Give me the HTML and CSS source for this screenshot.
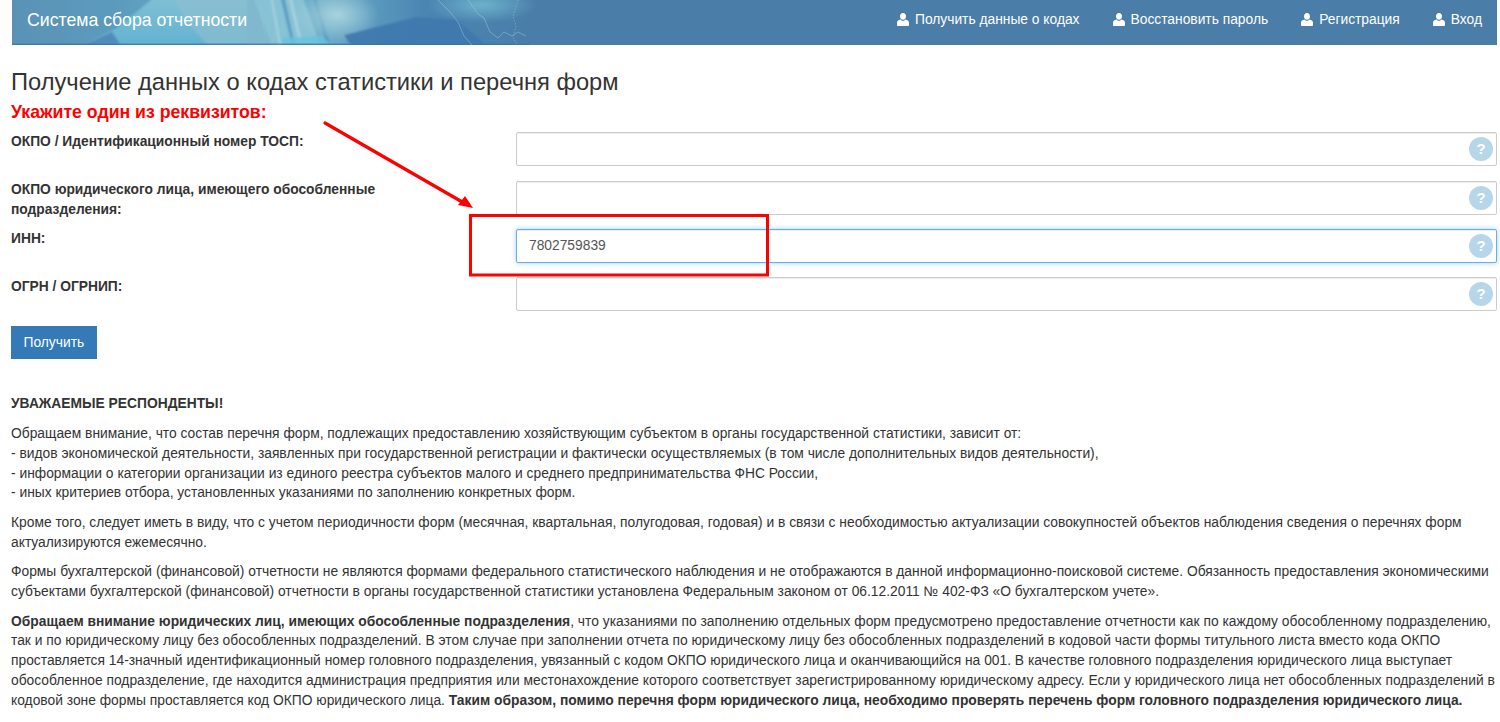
FILE: index.html
```html
<!DOCTYPE html>
<html lang="ru">
<head>
<meta charset="utf-8">
<title>Система сбора отчетности</title>
<link rel="stylesheet" href="styles.css">
</head>
<body>
<svg width="0" height="0" class="defs"><defs>
<symbol id="user" viewBox="0 0 12 13"><path d="M6 0C4.2 0 3 1.4 3 3.300 3 5 3.900 6.800 6 6.800S9 5 9 3.300C9 1.400 7.800 0 6 0zM3.600 6.400C1.500 6.900 0 7.700 0 9.400V12c0 .6.4 1 1 1h10c.6 0 1-.4 1-1V9.400c0-1.700-1.500-2.500-3.600-3-.6.8-1.400 1.400-2.400 1.400S4.200 7.200 3.600 6.400z" fill="#fff"/></symbol>
</defs></svg>
<header class="topbar">
  <svg class="topbar-art" viewBox="0 0 530 45" width="530" height="45" aria-hidden="true">
    <defs>
      <linearGradient id="base" x1="0" x2="1" y1="0" y2="0">
        <stop offset="0" stop-color="#5a92b6"/><stop offset=".2" stop-color="#5c9bbd"/><stop offset=".42" stop-color="#68adc8"/><stop offset=".6" stop-color="#6aaac8"/><stop offset=".78" stop-color="#4a85b2"/><stop offset="1" stop-color="#4a7da8"/>
      </linearGradient>
      <radialGradient id="glow"><stop offset="0" stop-color="#a8d3dd"/><stop offset="1" stop-color="#a8d3dd" stop-opacity="0"/></radialGradient>
      <radialGradient id="glow2"><stop offset="0" stop-color="#6db2cc"/><stop offset="1" stop-color="#6db2cc" stop-opacity="0"/></radialGradient>
      <linearGradient id="fade" x1="0" x2="0" y1="0" y2="1"><stop offset="0" stop-color="#82c0d4"/><stop offset="1" stop-color="#5fb2d2"/></linearGradient>
      <filter id="soft"><feGaussianBlur stdDeviation="1.200"/></filter>
    </defs>
    <rect width="530" height="45" fill="url(#base)"/>
    <g filter="url(#soft)">
      <polygon points="60,50 105,28 145,-5 235,-5 235,50" fill="url(#fade)"/>
      <polygon points="60,50 100,32 112,50" fill="#4f8cbc"/>
      <polygon points="160,-5 240,-5 265,50 200,50 175,22" fill="#8dbfd0" opacity=".65"/>
      <polygon points="240,-5 290,-5 310,50 262,50" fill="#8cc4d6" opacity=".9"/>
      <g fill="#4f93bb" opacity=".75">
        <polygon points="268,-5 272,-5 284,50 281,50"/>
        <polygon points="300,-5 303,-5 320,50 316,50"/>
      </g>
      <g fill="#b4dae2" opacity=".7">
        <polygon points="276,-5 279,-5 292,50 289,50"/>
        <polygon points="258,-5 260,-5 270,50 268,50"/>
      </g>
      <polygon points="270,38 310,36 325,50 270,50" fill="#66c2de" opacity=".8"/>
      <ellipse cx="325" cy="15" rx="42" ry="26" fill="url(#glow)"/>
      <ellipse cx="470" cy="5" rx="55" ry="18" fill="url(#glow2)"/>
      <polygon points="332,35 405,17 445,20 480,50 342,50" fill="#3f78ad" opacity=".9"/>
    </g>
    <rect y="43.500" width="518" height="1.500" fill="#3c76a6" opacity=".8"/>
    <g fill="none" stroke="#b7d6e2" stroke-width=".8" opacity=".5">
      <path d="M426 0l12 12 8 10 6 14 8 9"/>
      <path d="M456 0l10 14 6 4 6 14 8 6 6-6 8 4 6-4 8 4"/>
      <path d="M506 0l-5 16 3 10-3 12 4 6" stroke-dasharray="1.500 1.500"/>
      <path d="M280 10l8 28M248 6l6 35" stroke-dasharray="1 2"/>
    </g>
  </svg>
  <a class="brand" href="#">Система сбора отчетности</a>
  <nav class="nav">
    <a href="#"><svg class="user"><use href="#user"/></svg>Получить данные о кодах</a>
    <a href="#"><svg class="user"><use href="#user"/></svg>Восстановить пароль</a>
    <a href="#"><svg class="user"><use href="#user"/></svg>Регистрация</a>
    <a href="#"><svg class="user"><use href="#user"/></svg>Вход</a>
  </nav>
</header>
<main class="page">
  <h1 class="title">Получение данных о кодах статистики и перечня форм</h1>
  <div class="hint">Укажите один из реквизитов:</div>
  <form class="form">
    <label class="lbl">ОКПО / Идентификационный номер ТОСП:</label>
    <div class="field"><input type="text"><span class="help">?</span></div>
    <label class="lbl">ОКПО юридического лица, имеющего обособленные подразделения:</label>
    <div class="field"><input type="text"><span class="help">?</span></div>
    <label class="lbl">ИНН:</label>
    <div class="field"><input type="text" class="active" value="7802759839"><span class="help">?</span></div>
    <label class="lbl">ОГРН / ОГРНИП:</label>
    <div class="field"><input type="text"><span class="help">?</span></div>
  </form>
  <button class="btn" type="button">Получить</button>
  <section class="notes">
    <p><b>УВАЖАЕМЫЕ РЕСПОНДЕНТЫ!</b></p>
    <p>Обращаем внимание, что состав перечня форм, подлежащих предоставлению хозяйствующим субъектом в органы государственной статистики, зависит от:<br>
    - видов экономической деятельности, заявленных при государственной регистрации и фактически осуществляемых (в том числе дополнительных видов деятельности),<br>
    - информации о категории организации из единого реестра субъектов малого и среднего предпринимательства ФНС России,<br>
    - иных критериев отбора, установленных указаниями по заполнению конкретных форм.</p>
    <p>Кроме того, следует иметь в виду, что с учетом периодичности форм (месячная, квартальная, полугодовая, годовая) и в связи с необходимостью актуализации совокупностей объектов наблюдения сведения о перечнях форм актуализируются ежемесячно.</p>
    <p>Формы бухгалтерской (финансовой) отчетности не являются формами федерального статистического наблюдения и не отображаются в данной информационно-поисковой системе. Обязанность предоставления экономическими субъектами бухгалтерской (финансовой) отчетности в органы государственной статистики установлена Федеральным законом от 06.12.2011 № 402-ФЗ «О бухгалтерском учете».</p>
    <p><b>Обращаем внимание юридических лиц, имеющих обособленные подразделения</b>, что указаниями по заполнению отдельных форм предусмотрено предоставление отчетности как по каждому обособленному подразделению, так и по юридическому лицу без обособленных подразделений. В этом случае при заполнении отчета по юридическому лицу без обособленных подразделений в кодовой части формы титульного листа вместо кода ОКПО проставляется 14-значный идентификационный номер головного подразделения, увязанный с кодом ОКПО юридического лица и оканчивающийся на 001. В качестве головного подразделения юридического лица выступает обособленное подразделение, где находится администрация предприятия или местонахождение которого соответствует зарегистрированному юридическому адресу. Если у юридического лица нет обособленных подразделений в кодовой зоне формы проставляется код ОКПО юридического лица. <b>Таким образом, помимо перечня форм юридического лица, необходимо проверять перечень форм головного подразделения юридического лица.</b></p>
  </section>
</main>
<svg class="annot" width="1500" height="722" viewBox="0 0 1500 722" aria-hidden="true">
  <path d="M325 123L464 203" fill="none" stroke="#f00" stroke-width="3.200" stroke-linecap="round"/>
  <polygon points="473,208 458,205 465,196" fill="#f00"/>
  <rect x="470.500" y="215.500" width="297" height="59.500" fill="none" stroke="#f00" stroke-width="3"/>
</svg>
</body>
</html>
```
FILE: styles.css
```css
html, body { margin: 0; padding: 0; height: 722px; overflow: hidden; background: #fff; }
body { font: 13.800px/20px "Liberation Sans", Arial, sans-serif; color: #333; }
.defs { position: absolute; }
.topbar { position: relative; margin: 0 3px 0 12px; height: 45px; box-sizing: border-box; background: #4a7da8; display: flex; align-items: center; justify-content: space-between; padding: 0 15px 6px; overflow: hidden; }
.topbar-art { position: absolute; left: 0; top: 0; }
.brand { position: relative; color: #fff; font-size: 17.700px; text-decoration: none; }
.nav { position: relative; display: flex; gap: 33px; }
.nav a { color: #fff; text-decoration: none; display: flex; align-items: center; gap: 6px; }
.user { width: 12px; height: 13px; }
.page { padding: 0 3px 0 11px; }
.title { margin: 24px 0 0; font-size: 23.700px; line-height: 26px; font-weight: 400; }
.hint { margin-top: 7px; color: #f00; font-size: 17.700px; font-weight: 700; line-height: 20px; }
.form { margin-top: 10.300px; display: grid; grid-template-columns: 505px 1fr; grid-auto-rows: 34px; row-gap: 14.330px; }
.lbl { font-weight: 700; padding-right: 100px; margin-top: -0.250px; }
.field { position: relative; }
.field input { box-sizing: border-box; display: block; width: 100%; height: 34px; padding: 6px 12px; border: 1px solid #ccc; border-radius: 2px; outline: 0; font: 13.800px/20px "Liberation Sans", Arial, sans-serif; color: #555; box-shadow: inset 0 1px 1px rgba(0,0,0,.075); }
.field input.active { border-color: #66afe9; box-shadow: inset 0 1px 1px rgba(0,0,0,.075), 0 0 5px rgba(102,175,233,.6); }
.help { position: absolute; right: 4px; top: 5px; width: 24px; height: 24px; border-radius: 50%; background: #b6d7ea; color: #fff; font-weight: 700; font-size: 15px; line-height: 24px; text-align: center; }
.btn { display: block; margin-top: 14.700px; height: 33px; padding: 1px 12px 0 11.500px; width: 86px; text-align: left; background: #337ab7; border: 1px solid #337ab7; color: #fff; font: 13.800px/20px "Liberation Sans", Arial, sans-serif; border-radius: 0; }
.notes { margin-top: 35.500px; font-size: 13.820px; line-height: 19.750px; }
.notes p { margin: 0 0 9.850px; }
.annot { position: absolute; left: 0; top: 0; pointer-events: none; }
```
